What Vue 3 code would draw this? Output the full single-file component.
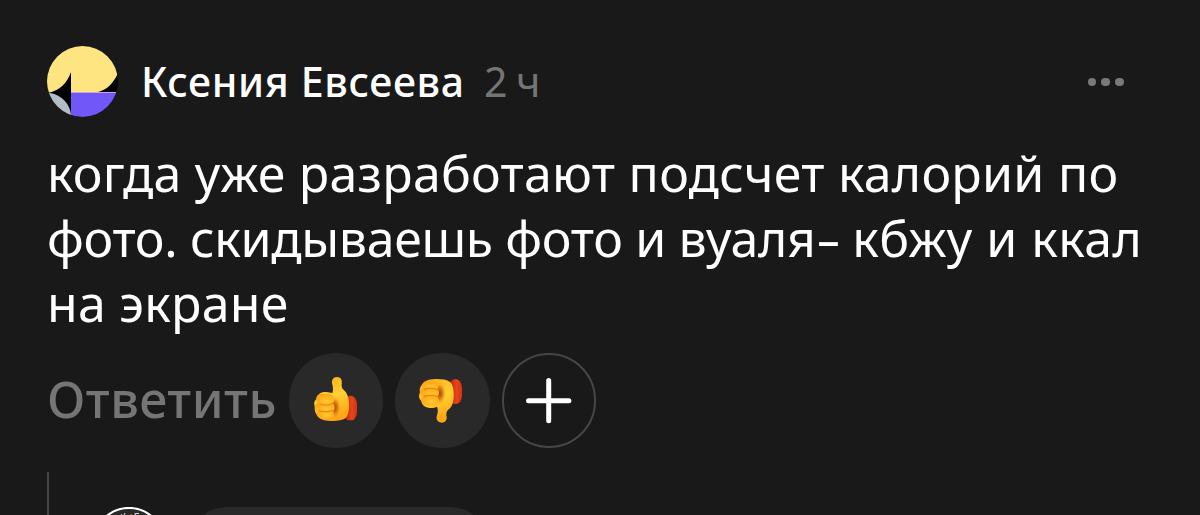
<script setup>
const author = 'Ксения Евсеева';
const time = '2 ч';
</script>

<template>
  <div class="comment">
    <header class="comment-header">
      <svg class="avatar" viewBox="0 0 72 72">
        <defs>
          <clipPath id="avatar-clip">
            <circle cx="35.500" cy="35.500" r="35.500" />
          </clipPath>
        </defs>
        <g clip-path="url(#avatar-clip)">
          <rect width="72" height="72" fill="#000" />
          <path d="M0 0H71V27C66 38 60 44 49 46.500H24V26C20 37 13 44 3 46.500H0Z" fill="#ffe482" />
          <rect x="24" y="46" width="48" height="1" fill="#c9a4d8" />
          <rect x="24" y="47" width="48" height="25" fill="#7257f8" />
          <path d="M0 47H3C15 49 23 58 24 69V72H0Z" fill="#b3bec4" />
        </g>
      </svg>
      <span class="author">{{ author }}</span>
      <span class="time">{{ time }}</span>
      <button class="more" aria-label="Ещё">
        <i></i>
        <i></i>
        <i></i>
      </button>
    </header>

    <p class="comment-text">
      <span class="line wide">когда уже разработают подсчет калорий по</span>
      <span class="line"><span class="tight">фото. скидываешь фото и вуаля</span><span class="dash">-</span><span class="loose"> кбжу и ккал</span></span>
      <span class="line wide">на экране</span>
    </p>

    <div class="comment-actions">
      <button class="reply">Ответить</button>
      <button class="reaction">
        <svg viewBox="-49 -51 283 283">
          <defs>
            <linearGradient id="hand" x1="0" y1="0" x2="0.3" y2="1">
              <stop offset="0" stop-color="#ffab16" />
              <stop offset="0.55" stop-color="#ffd032" />
              <stop offset="1" stop-color="#ffa617" />
            </linearGradient>
            <radialGradient id="finger" cx="0.6" cy="0.65" r="0.65">
              <stop offset="0" stop-color="#ffc832" />
              <stop offset="1" stop-color="#ffa514" />
            </radialGradient>
            <radialGradient id="shade">
              <stop offset="0" stop-color="#a93b06" />
              <stop offset="0.5" stop-color="#d97610" stop-opacity="0.8" />
              <stop offset="1" stop-color="#ffc42c" stop-opacity="0" />
            </radialGradient>
            <linearGradient id="cuff" x1="0" y1="0" x2="1" y2="0">
              <stop offset="0" stop-color="#b72405" />
              <stop offset="0.6" stop-color="#e8431c" />
              <stop offset="1" stop-color="#cf3510" />
            </linearGradient>
          </defs>
          <rect x="115" y="77" width="40" height="74" rx="17" ry="28" fill="url(#cuff)" />
          <path
            d="M81 44C77 31 83 21 95 21C108 21 111 32 109 43C108 51 110 56 116 61C126 70 131 84 131 106C131 124 128 138 120 145C111 151 98 153 83 153C62 153 43 149 36 137C28 128 27 117 29 112C25 101 26 91 35 87C34 74 45 66 60 66C68 65 74 68 81 69C84 60 83 51 81 44Z"
            fill="url(#hand)"
          />
          <ellipse cx="88" cy="112" rx="20" ry="36" fill="url(#shade)" />
          <rect x="35" y="118" width="50" height="27" rx="13" fill="url(#finger)" />
          <rect x="28" y="99" width="60" height="27" rx="13" fill="url(#finger)" />
          <rect x="32" y="72" width="54" height="33" rx="16" fill="url(#finger)" />
          <path d="M44 102C58 107 75 106 82 99M42 122C58 127 75 125 82 120" fill="none" stroke="#d97b0b" stroke-width="2.500" stroke-linecap="round" />
        </svg>
      </button>
      <button class="reaction">
        <svg viewBox="-44 -51 283 283">
          <rect x="117" y="28" width="40" height="74" rx="17" ry="28" fill="url(#cuff)" />
          <path
            d="M82 136C77 149 85 158 98 158C110 157 113 146 110 136C109 128 112 122 118 117C128 109 132 94 132 74C132 56 129 43 121 36C112 29 98 27 83 27C63 27 45 31 38 42C30 51 29 60 31 67C26 78 28 88 36 93C36 105 47 113 61 114C69 115 77 112 82 110C86 119 84 129 82 136Z"
            fill="url(#hand)"
          />
          <ellipse cx="90" cy="70" rx="20" ry="36" fill="url(#shade)" />
          <rect x="37" y="34" width="48" height="28" rx="14" fill="url(#finger)" />
          <rect x="31" y="54" width="57" height="28" rx="14" fill="url(#finger)" />
          <rect x="34" y="75" width="53" height="32" rx="16" fill="url(#finger)" />
          <path d="M44 58C58 52 75 53 82 60M44 79C58 74 75 74 82 80" fill="none" stroke="#d97b0b" stroke-width="2.500" stroke-linecap="round" />
        </svg>
      </button>
      <button class="reaction add">
        <svg viewBox="0 0 94 94">
          <path d="M46.500 26.500V68.500M25.500 47.500H67.500" stroke="#fff" stroke-width="5.200" stroke-linecap="round" />
        </svg>
      </button>
    </div>

    <div class="replies">
      <svg class="reply-avatar" viewBox="0 0 72 72">
        <circle cx="36" cy="36" r="35" fill="#29292a" stroke="#fff" stroke-width="2.200" />
        <path d="M25 9L26.500 12M28 7L30 10L32 6M31 10L33 12M42 11V6.500H46M42 8.500H45" fill="none" stroke="#ddd" stroke-width="1" />
        <path d="M37 8H39" stroke="#8d7330" stroke-width="1.500" />
      </svg>
      <div class="reply-bubble"></div>
    </div>
  </div>
</template>

<style>
body {
  margin: 0;
  background: #19191a;
}
</style>

<style scoped>
.comment {
  box-sizing: border-box;
  width: 1200px;
  height: 515px;
  padding: 46px 48px 0 47px;
  overflow: hidden;
  background: #19191a;
  color: #fff;
  font-family: 'Noto Sans', 'Open Sans', sans-serif;
}
button {
  padding: 0;
  border: none;
  background: none;
  font: inherit;
  cursor: pointer;
}
.comment-header {
  display: flex;
  align-items: center;
  height: 72px;
}
.avatar {
  width: 72px;
  height: 72px;
  flex: none;
}
.author {
  width: 343px;
  margin-left: 22px;
  padding-bottom: 2px;
  font-size: 41px;
  font-weight: 500;
  letter-spacing: 0.650px;
  white-space: nowrap;
}
.time {
  padding-bottom: 2px;
  color: #757576;
  font-size: 41px;
  letter-spacing: -0.900px;
}
.more {
  display: flex;
  gap: 5.100px;
  margin-left: auto;
  margin-right: 28.500px;
}
.more i {
  width: 8.500px;
  height: 8.500px;
  border-radius: 50%;
  background: #79797a;
}
.comment-text {
  margin: 23px 0 0;
  font-size: 50px;
  line-height: 65px;
}
.line {
  display: block;
  white-space: pre;
}
.wide {
  letter-spacing: 0.260px;
}
.tight {
  letter-spacing: -0.330px;
}
.loose {
  letter-spacing: 0.450px;
}
.dash {
  display: inline-block;
  margin-right: 7px;
  transform: scaleX(1.550);
  transform-origin: left;
}
.comment-actions {
  display: flex;
  align-items: center;
  gap: 12px;
  height: 95px;
  margin-top: 17px;
}
.reply {
  width: 230px;
  padding-bottom: 3px;
  color: #757576;
  font-size: 50px;
  font-weight: 500;
  letter-spacing: 0.500px;
  text-align: left;
  white-space: nowrap;
}
.reaction {
  box-sizing: border-box;
  flex: none;
  width: 94.400px;
  height: 94.400px;
  border-radius: 50%;
  background: #29292a;
}
.reaction svg {
  display: block;
  width: 100%;
  height: 100%;
}
.add {
  border: 2px solid #464647;
  background: none;
}
.replies {
  display: flex;
  gap: 22px;
  height: 60px;
  margin-top: 24px;
  padding: 35px 0 0 44px;
  border-left: 2px solid #454546;
}
.reply-avatar {
  flex: none;
  width: 72px;
  height: 72px;
}
.reply-bubble {
  width: 303px;
  height: 90px;
  border-radius: 40px;
  background: #29292a;
}
</style>
